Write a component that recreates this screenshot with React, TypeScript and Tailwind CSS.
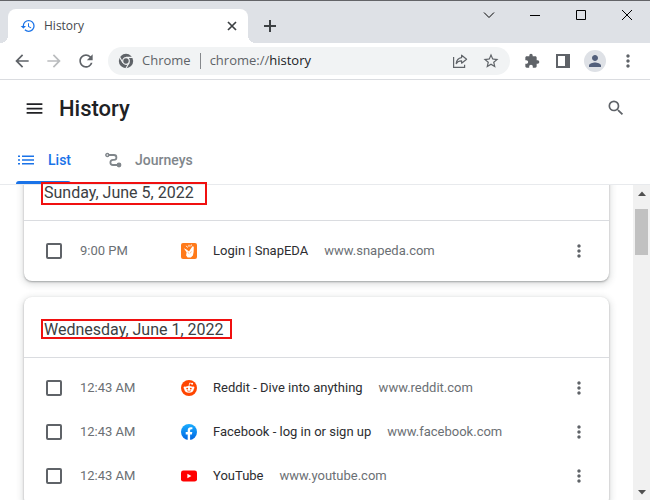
import type { ReactNode } from "react";
import {
  MdArrowBack,
  MdArrowForward,
  MdExtension,
  MdHistory,
  MdMenu,
  MdMoreVert,
  MdPerson,
  MdRefresh,
  MdSearch,
  MdStarBorder,
} from "react-icons/md";

type Entry = {
  time: string;
  title: string;
  domain: string;
  icon: ReactNode;
};

const SnapEdaIcon = () => (
  <svg viewBox="0 0 16 16" className="size-4 shrink-0">
    <rect width="16" height="16" rx="2" fill="#ff7a1a" />
    <path d="M2.8 5.2l2.6 1.3L8 8.6l1.3-2.2 2.2-3.2 1.3.6-.2 5.2-.7 3.5-2.1 2.1H6.6l-1.5-2.2.5-3.2z" fill="#fff" />
    <path d="M5.3 2.8l1.2 1.7M8 1.8v2M10.4 1.6L9.8 3.4" stroke="#fff" strokeWidth="1" />
    <path d="M6.6 9.2l1.6 1.4M10.4 8.4l-1.3 2" stroke="#ff7a1a" strokeWidth=".5" />
  </svg>
);

const RedditIcon = () => (
  <svg viewBox="0 0 16 16" className="size-4 shrink-0">
    <circle cx="8" cy="8" r="8" fill="#ff4500" />
    <path d="M8 6l.7-3 2 .5" fill="none" stroke="#fff" strokeWidth=".8" />
    <circle cx="11.1" cy="3.8" r="1" fill="#fff" />
    <circle cx="3.8" cy="7.8" r="1.2" fill="#fff" />
    <circle cx="12.2" cy="7.8" r="1.2" fill="#fff" />
    <ellipse cx="8" cy="9.3" rx="4.6" ry="3.4" fill="#fff" />
    <circle cx="6.2" cy="8.6" r=".95" fill="#ff4500" />
    <circle cx="9.8" cy="8.6" r=".95" fill="#ff4500" />
    <path d="M6 10.6q2 1.5 4 0" fill="none" stroke="#ff4500" strokeWidth=".7" />
  </svg>
);

const FacebookIcon = () => (
  <svg viewBox="0 0 16 16" className="size-4 shrink-0">
    <defs>
      <linearGradient id="fb" x1="0" y1="0" x2="0" y2="1">
        <stop offset="0" stopColor="#19adff" />
        <stop offset="1" stopColor="#0165e1" />
      </linearGradient>
    </defs>
    <circle cx="8" cy="8" r="8" fill="url(#fb)" />
    <path
      d="M6.7 15.9v-5.5h-2V8h2V6.3c0-2 1.2-3.1 3-3.1.9 0 1.7.1 1.7.1v2h-1c-1 0-1.3.6-1.3 1.2V8h2.2l-.4 2.4H9.1v5.5a8 8 0 01-2.4 0z"
      fill="#fff"
    />
  </svg>
);

const YouTubeIcon = () => (
  <svg viewBox="0 0 16 16" className="size-4 shrink-0">
    <rect y="2.4" width="16" height="11.2" rx="2.4" fill="#f00" />
    <path d="M6.4 5.7v4.6L10.4 8z" fill="#fff" />
  </svg>
);

const ChromeIcon = () => (
  <svg viewBox="0 0 16 16" className="size-4 shrink-0">
    <circle cx="8" cy="8" r="7.2" fill="#5f6368" />
    <circle cx="8" cy="8" r="3.3" fill="none" stroke="#f1f3f4" strokeWidth="1.2" />
    <path d="M8 4.4h7.4M4.9 9.8L1.2 3.4M11.1 9.8l-3.7 6.4" stroke="#f1f3f4" strokeWidth="1.1" />
  </svg>
);

const JourneysIcon = () => (
  <svg viewBox="0 0 17 16" className="h-4 w-[17px]" fill="none" stroke="currentColor">
    <circle cx="2.3" cy="3" r="1.5" strokeWidth="1.4" />
    <path d="M4 3h5a2.4 2.4 0 010 4.8H8A2.6 2.6 0 008 13h5" strokeWidth="1.8" />
    <circle cx="14" cy="13" r="2.4" fill="currentColor" stroke="none" />
  </svg>
);

const ListIcon = () => (
  <svg viewBox="0 0 16 10" className="h-[10px] w-4" fill="currentColor">
    <path d="M0 .5h2V2H0zM0 4.2h2v1.6H0zM0 8h2v1.5H0zM4 .5h12V2H4zM4 4.2h12v1.6H4zM4 8h12v1.5H4z" />
  </svg>
);

const ShareIcon = () => (
  <svg viewBox="0 0 16 16" className="size-4" fill="none" stroke="#5f6368" strokeWidth="1.2">
    <path d="M1.6 4v10.4h11V11.8" />
    <path d="M9.6 2.2l5 4-5 4V7.9C7 7.8 5.4 8.8 4.2 10.6 4.5 7.4 6.4 5 9.6 4.6z" strokeLinejoin="round" />
  </svg>
);

const groups: { date: string; entries: Entry[] }[] = [
  {
    date: "Sunday, June 5, 2022",
    entries: [{ time: "9:00 PM", title: "Login | SnapEDA", domain: "www.snapeda.com", icon: <SnapEdaIcon /> }],
  },
  {
    date: "Wednesday, June 1, 2022",
    entries: [
      { time: "12:43 AM", title: "Reddit - Dive into anything", domain: "www.reddit.com", icon: <RedditIcon /> },
      { time: "12:43 AM", title: "Facebook - log in or sign up", domain: "www.facebook.com", icon: <FacebookIcon /> },
      { time: "12:43 AM", title: "YouTube", domain: "www.youtube.com", icon: <YouTubeIcon /> },
    ],
  },
];

function TabStrip() {
  return (
    <div className="flex h-[43px] items-start border-t border-[#636468] bg-[#dee1e6] pl-2">
      <div className="relative mt-2 flex h-[34px] w-60 items-center rounded-t-lg bg-white pr-[9px] pl-3">
        <span className="absolute bottom-0 -left-2 size-2 bg-[radial-gradient(circle_at_0_0,#dee1e6_8px,white_8px)]" />
        <span className="absolute -right-2 bottom-0 size-2 bg-[radial-gradient(circle_at_100%_0,#dee1e6_8px,white_8px)]" />
        <MdHistory className="size-4 text-[#1a73e8]" />
        <span className="ml-2 flex-1 text-xs text-[#45484d]">History</span>
        <button aria-label="Close tab" className="text-[#3c4043]">
          <svg viewBox="0 0 14 14" className="size-[14px]" stroke="currentColor" strokeWidth="1.7">
            <path d="M3 3l8 8M11 3l-8 8" />
          </svg>
        </button>
      </div>
      <button aria-label="New tab" className="mt-[15px] ml-3 text-[#3c4043]">
        <svg viewBox="0 0 20 20" className="size-5" stroke="currentColor" strokeWidth="2">
          <path d="M10 4v12M4 10h12" />
        </svg>
      </button>
      <div className="ml-auto flex pt-2 text-black">
        <button aria-label="Search tabs" className="flex h-3 w-[46px] items-center justify-center">
          <svg viewBox="0 0 12 12" className="size-3" fill="none" stroke="currentColor">
            <path d="M1 3.5l5 5 5-5" />
          </svg>
        </button>
        <button aria-label="Minimize" className="flex h-3 w-[46px] items-center justify-center">
          <svg viewBox="0 0 12 12" className="size-3" stroke="currentColor">
            <path d="M1 6.5h10" />
          </svg>
        </button>
        <button aria-label="Maximize" className="flex h-3 w-[46px] items-center justify-center">
          <svg viewBox="0 0 12 12" className="size-3" fill="none" stroke="currentColor">
            <path d="M1.5 1.5h9v9h-9z" />
          </svg>
        </button>
        <button aria-label="Close" className="flex h-3 w-[46px] items-center justify-center">
          <svg viewBox="0 0 12 12" className="size-3" stroke="currentColor">
            <path d="M1 1l10 10M11 1L1 11" />
          </svg>
        </button>
      </div>
    </div>
  );
}

function Toolbar() {
  return (
    <div className="flex h-[37px] items-center border-b border-[#dadce0] bg-white px-3 text-[#5f6368]">
      <button aria-label="Back">
        <MdArrowBack className="size-5" />
      </button>
      <button aria-label="Forward" className="ml-3 text-[#babcbe]">
        <MdArrowForward className="size-5" />
      </button>
      <button aria-label="Reload" className="ml-3">
        <MdRefresh className="size-5" />
      </button>
      <div className="ml-3 flex h-7 flex-1 items-center rounded-full bg-[#f1f3f4] px-[10px] text-[13px]">
        <ChromeIcon />
        <span className="ml-2">Chrome</span>
        <span className="mx-[9px] h-4 w-px bg-[#85888c]" />
        <span className="flex-1 whitespace-nowrap">
          chrome://<span className="text-[#202124]">history</span>
        </span>
        <button aria-label="Share">
          <ShareIcon />
        </button>
        <button aria-label="Bookmark" className="ml-[14px]">
          <MdStarBorder className="size-[18px]" />
        </button>
      </div>
      <button aria-label="Extensions" className="ml-[14px]">
        <MdExtension className="size-4" />
      </button>
      <button aria-label="Side panel" className="ml-4">
        <svg viewBox="0 0 14 14" className="size-[14px]">
          <path d="M0 0h14v14H0z" fill="#5f6368" />
          <path d="M2 2h7v10H2z" fill="#fff" />
        </svg>
      </button>
      <button
        aria-label="Profile"
        className="ml-[14px] flex size-[22px] items-center justify-center rounded-full bg-[#dee1e6] text-[#525f7b]"
      >
        <MdPerson className="size-[18px]" />
      </button>
      <button aria-label="Menu" className="ml-3">
        <MdMoreVert className="size-5" />
      </button>
    </div>
  );
}

function PageHeader() {
  return (
    <header className="border-b border-[#e8eaed] bg-white font-['Roboto',sans-serif]">
      <div className="flex h-14 items-center px-6">
        <button aria-label="Main menu" className="text-[#202124]">
          <MdMenu className="size-[21px]" />
        </button>
        <h1 className="ml-[14px] flex-1 text-[22px] font-medium text-[#202124]">History</h1>
        <button aria-label="Search history" className="text-[#5f6368]">
          <MdSearch className="size-5" />
        </button>
      </div>
      <div role="tablist" className="flex h-12 pl-4 text-sm font-medium">
        <button role="tab" aria-selected="true" className="relative flex items-center gap-[14px] pl-[2px] text-[#1a73e8]">
          <ListIcon />
          List
          <span className="absolute bottom-0 left-0 h-[3px] w-full rounded-t-sm bg-[#1a73e8]" />
        </button>
        <button role="tab" aria-selected="false" className="ml-[34px] flex items-center gap-[13px] text-[#80868b]">
          <JourneysIcon />
          Journeys
        </button>
      </div>
    </header>
  );
}

function HistoryRow({ entry }: { entry: Entry }) {
  return (
    <li className="flex h-11 items-center pr-5 pl-[22px] text-[13px] whitespace-nowrap text-[#6b6f74]">
      <label className="flex w-[135px] items-center gap-[18px]">
        <input
          type="checkbox"
          className="size-4 appearance-none rounded-xs border-2 border-[#5f6368] checked:bg-[#1a73e8]"
        />
        {entry.time}
      </label>
      {entry.icon}
      <a href="#" className="ml-4 text-[#2c2d30]">
        {entry.title}
      </a>
      <span className="ml-4 flex-1">{entry.domain}</span>
      <button aria-label={"Actions for " + entry.title} className="text-[#5f6368]">
        <MdMoreVert className="size-5" />
      </button>
    </li>
  );
}

function ScrollBar() {
  return (
    <div className="flex w-[17px] flex-col items-center justify-between bg-[#f1f1f1] pt-[6px] pb-[5px]">
      <div className="flex flex-col items-center gap-[13px]">
        <svg viewBox="0 0 8 5" className="h-[5px] w-2">
          <path d="M0 5l4-4.5L8 5z" fill="#505050" />
        </svg>
        <div className="h-[46px] w-[13px] bg-[#c1c1c1]" />
      </div>
      <svg viewBox="0 0 8 5" className="h-[5px] w-2">
        <path d="M0 0l4 4.5L8 0z" fill="#505050" />
      </svg>
    </div>
  );
}

export default function App() {
  return (
    <div className="flex h-screen flex-col overflow-hidden bg-white font-['Open_Sans',sans-serif]">
      <TabStrip />
      <Toolbar />
      <PageHeader />
      <main className="relative flex min-h-0 flex-1 font-['Roboto',sans-serif]">
        <div className="flex-1 overflow-hidden px-6">
          <div className="-mt-[25px] flex flex-col gap-4">
            {groups.map((group) => (
              <section
                key={group.date}
                className="rounded-lg bg-white shadow-[0_1px_2px_rgba(60,64,67,0.4),0_2px_6px_2px_rgba(60,64,67,0.15)]"
              >
                <h2 className="flex h-[61px] items-center border-b border-[#dadce0] px-5 pt-[6px] text-base leading-[14px] text-[#3c4043]">
                  {group.date}
                </h2>
                <ul className="py-2">
                  {group.entries.map((entry) => (
                    <HistoryRow key={entry.title} entry={entry} />
                  ))}
                </ul>
              </section>
            ))}
          </div>
        </div>
        <ScrollBar />
        {/* highlight boxes over the dates */}
        <div className="absolute -top-[3px] left-[41px] h-[23px] w-[166px] border-2 border-[#f01010]" />
        <div className="absolute top-[134px] left-[41px] h-5 w-[191px] border-2 border-[#f01010]" />
      </main>
    </div>
  );
}
